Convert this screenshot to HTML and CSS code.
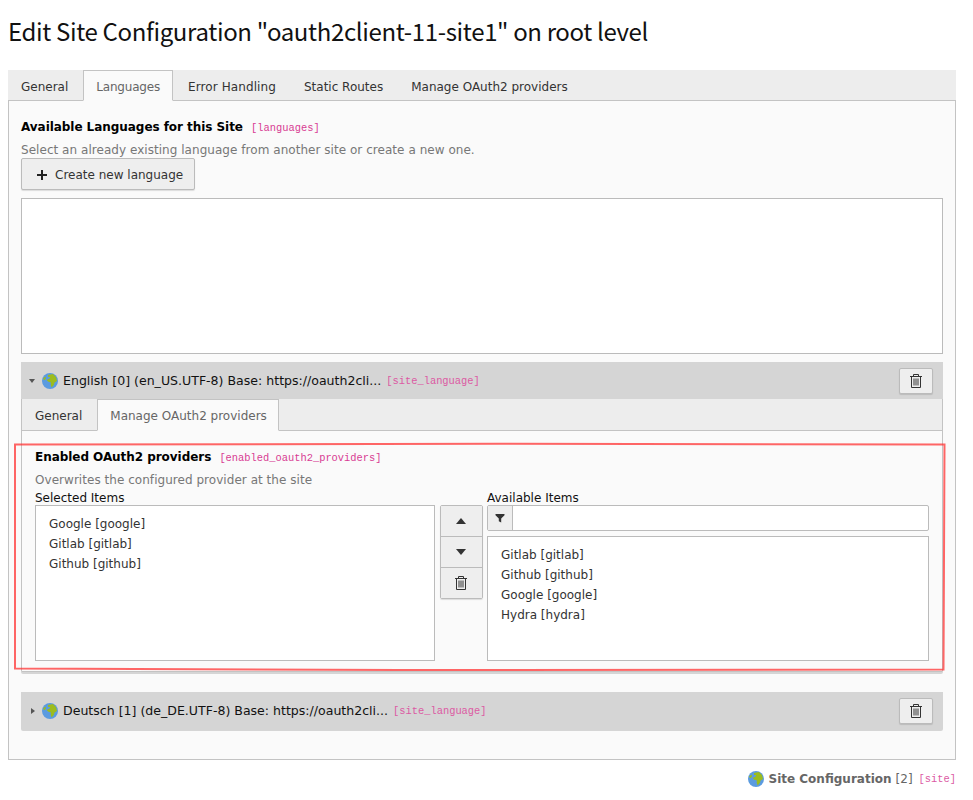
FILE: index.html
```html
<!DOCTYPE html>
<html lang="en">
<head>
    <meta charset="UTF-8">
    <title>Edit Site Configuration</title>
    <link rel="stylesheet" href="styles.css">
</head>
<body>
<svg width="0" height="0" class="defs">
    <symbol id="icon-globe" viewBox="0 0 16 16">
        <circle cx="8" cy="8" r="8" fill="#5b9be0"/>
        <path d="M6 2 L11 1 L14 4 L15 8 L12.6 9.4 L11.8 12 L9.6 14.6 L8.6 11.6 L9 9.4 L6.4 8.8 L4.6 7 L7.6 5.6 L8 4 L6 4 Z" fill="#9cbc1e"/>
        <path d="M1 5.4 L3.4 3.4 L4 5.4 L2.2 7.2 Z" fill="#9cbc1e"/>
    </symbol>
    <symbol id="icon-trash" viewBox="0 0 16 16">
        <path d="M5.5 3V1.5h5V3M2 3.5h12M3.5 3.5v11h9v-11M6 5.5v7M8 5.5v7M10 5.5v7" fill="none" stroke="#333" stroke-width="1"/>
    </symbol>
</svg>

<h1 class="title">Edit Site Configuration "oauth2client-11-site1" on root level</h1>

<div class="tabs">
    <a class="tab">General</a>
    <a class="tab tab-active tab-languages">Languages</a>
    <a class="tab tab-error">Error Handling</a>
    <a class="tab">Static Routes</a>
    <a class="tab">Manage OAuth2 providers</a>
</div>

<div class="panel">
    <div class="field-title">Available Languages for this Site <code class="key">[languages]</code></div>
    <div class="field-desc">Select an already existing language from another site or create a new one.</div>
    <button class="btn btn-create">
        <svg class="plus" width="10" height="10" viewBox="0 0 10 10"><path d="M4 0h2v4h4v2H6v4H4V6H0V4h4Z" fill="#222"/></svg>
        Create new language
    </button>
    <div class="lang-box"></div>

    <div class="inline-item inline-open">
        <div class="inline-head">
            <span class="caret caret-down"></span>
            <svg class="globe"><use href="#icon-globe"/></svg>
            <span class="inline-label">English [0] (en_US.UTF-8) Base: https://oauth2cli...</span>
            <code class="key key-soft">[site_language]</code>
            <button class="btn btn-trash"><svg class="trash"><use href="#icon-trash"/></svg></button>
        </div>
        <div class="tabs tabs-inner">
            <a class="tab">General</a>
            <a class="tab tab-active">Manage OAuth2 providers</a>
        </div>
        <div class="inner-body">
            <div class="field-title">Enabled OAuth2 providers <code class="key">[enabled_oauth2_providers]</code></div>
            <div class="field-desc">Overwrites the configured provider at the site</div>
            <div class="multi">
                <div class="multi-col">
                    <div class="multi-label">Selected Items</div>
                    <ul class="list list-selected">
                        <li>Google [google]</li>
                        <li>Gitlab [gitlab]</li>
                        <li>Github [github]</li>
                    </ul>
                </div>
                <div class="multi-actions">
                    <button class="action"><span class="arrow arrow-up"></span></button>
                    <button class="action"><span class="arrow arrow-down"></span></button>
                    <button class="action"><svg class="trash"><use href="#icon-trash"/></svg></button>
                </div>
                <div class="multi-col">
                    <div class="multi-label">Available Items</div>
                    <div class="filter">
                        <span class="filter-addon">
                            <svg width="10" height="10" viewBox="0 0 10 10"><path d="M0.5 1h9v1.2L6.2 5.4V9.4L3.8 8.2V5.4L0.5 2.2Z" fill="#333"/></svg>
                        </span>
                    </div>
                    <ul class="list list-available">
                        <li>Gitlab [gitlab]</li>
                        <li>Github [github]</li>
                        <li>Google [google]</li>
                        <li>Hydra [hydra]</li>
                    </ul>
                </div>
            </div>
        </div>
    </div>

    <div class="inline-item">
        <div class="inline-head">
            <span class="caret caret-right"></span>
            <svg class="globe"><use href="#icon-globe"/></svg>
            <span class="inline-label">Deutsch [1] (de_DE.UTF-8) Base: https://oauth2cli...</span>
            <code class="key key-soft">[site_language]</code>
            <button class="btn btn-trash"><svg class="trash"><use href="#icon-trash"/></svg></button>
        </div>
    </div>
</div>

<div class="footer">
    <svg class="globe"><use href="#icon-globe"/></svg>
    <strong>Site Configuration</strong> <span>[2]</span> <code class="key key-soft">[site]</code>
</div>

<!-- red marker drawn over the screenshot -->
<svg class="marker" width="973" height="800" viewBox="0 0 973 800">
    <path d="M15 444.5 L500 443.8 L944.5 444.5 L943.5 669.5 L400 670 L15 668.5 Z" fill="none" stroke="#ff2b2b" stroke-opacity="0.72" stroke-width="2"/>
</svg>
</body>
</html>
```
FILE: styles.css
```css
body {
    margin: 0;
    padding: 0 17px 0 8px;
    background-color: #fff;
    color: #333;
    font-family: "DejaVu Sans", sans-serif;
    font-size: 12px;
    line-height: 18px;
}

.defs {
    position: absolute;
}

.title {
    margin: 0;
    padding-top: 16px;
    height: 70px;
    box-sizing: border-box;
    font-family: "Noto Sans CJK SC", "Noto Sans", sans-serif;
    font-size: 24px;
    line-height: 30px;
    letter-spacing: -0.35px;
    font-weight: 400;
    color: #111;
}

.tabs {
    display: flex;
    height: 31px;
    background-color: #ededed;
    border-bottom: 1px solid #c3c3c3;
    box-sizing: border-box;
}

.tab {
    margin-right: 2px;
    padding: 8px 13px 0;
    height: 31px;
    box-sizing: border-box;
    font-size: 12px;
    color: #333;
}

.tab-active {
    padding: 7px 12px 0;
    background-color: #fafafa;
    color: #666;
    border: 1px solid #c3c3c3;
    border-bottom: 1px solid #fafafa;
}

.tab-languages {
    letter-spacing: -0.2px;
}

.tab-error {
    letter-spacing: 0.1px;
}

.panel {
    height: 659px;
    box-sizing: border-box;
    padding: 17px 12px 0;
    background-color: #fafafa;
    border: 1px solid #c3c3c3;
    border-top: 0;
}

.field-title {
    font-weight: 700;
    color: #000;
    height: 19px;
    letter-spacing: -0.05px;
}

.key {
    margin-left: 4px;
    font-family: "Liberation Mono", monospace;
    font-size: 10.4px;
    font-weight: 400;
    letter-spacing: 0;
    color: #d83c93;
}

.key-soft {
    color: #dc5aa3;
    margin-left: 2px;
}

.field-desc {
    margin-top: 4px;
    color: #777;
    height: 18px;
    letter-spacing: 0.04px;
}

.btn {
    font: inherit;
    color: #333;
    background-color: #eee;
    border: 1px solid #bbb;
    border-radius: 2px;
    box-shadow: 0 1px 1px rgba(0, 0, 0, 0.12);
}

.btn-create {
    display: flex;
    align-items: center;
    gap: 8px;
    margin-top: -1px;
    width: 174px;
    height: 32px;
    padding: 1px 0 0 15px;
}

.lang-box {
    margin-top: 8px;
    height: 156px;
    box-sizing: border-box;
    background-color: #fff;
    border: 1px solid #bbb;
}

.inline-item {
    margin-top: 8px;
    border-radius: 2px;
    box-shadow: 0 2px 0 #d5d5d5;
}

.inline-open {
    height: 310px;
    background-color: #ededed;
    border-left: 1px solid #c3c3c3;
    border-right: 1px solid #c3c3c3;
}

.inline-item + .inline-item {
    margin-top: 20px;
}

.inline-head {
    display: flex;
    align-items: center;
    height: 37px;
    padding: 0 10px 0 8px;
    background-color: #d5d5d5;
    color: #111;
}

.inline-open .inline-head {
    margin: 0 -1px;
}

.caret {
    width: 0;
    height: 0;
    margin-right: 7px;
    border-style: solid;
    border-color: transparent;
}

.caret-down {
    border-width: 4px 3.5px 0;
    border-top-color: #555;
}

.caret-right {
    margin-left: 2px;
    border-width: 3.5px 0 3.5px 4px;
    border-left-color: #555;
}

.globe {
    width: 16px;
    height: 16px;
    flex: none;
}

.inline-label {
    margin-left: 5px;
    font-size: 12.55px;
}

.inline-head .key {
    margin-left: 5px;
}

.btn-trash {
    margin-left: auto;
    display: flex;
    align-items: center;
    justify-content: center;
    width: 34px;
    height: 26px;
    padding: 0;
}

.trash {
    width: 16px;
    height: 16px;
}

.tabs-inner {
    height: 32px;
}

.tabs-inner .tab {
    height: 32px;
}

.tabs-inner .tab-active {
    padding-right: 11px;
}

.inner-body {
    height: 241px;
    box-sizing: border-box;
    padding: 17px 13px 0;
    background-color: #fafafa;
    border-bottom: 1px solid #c3c3c3;
}

.multi {
    display: flex;
}

.multi-col {
    flex: 1;
    min-width: 0;
}

.multi-col:first-child {
    flex: none;
    width: 400px;
}

.multi-label {
    height: 17px;
    line-height: 20px;
    margin-top: -1px;
    color: #111;
}

.list {
    margin: 0;
    padding: 8px 0 0 13px;
    list-style: none;
    box-sizing: border-box;
    background-color: #fff;
    border: 1px solid #bbb;
    line-height: 20px;
}

.list-selected {
    height: 156px;
}

.list-available {
    height: 125px;
    margin-top: 5px;
}

.multi-actions {
    display: flex;
    flex-direction: column;
    margin: 16px 4px 0 5px;
    width: 43px;
    height: 94px;
    box-sizing: border-box;
    border: 1px solid #bbb;
    border-radius: 2px;
    box-shadow: 0 1px 1px rgba(0, 0, 0, 0.12);
}

.action {
    display: flex;
    align-items: center;
    justify-content: center;
    flex: 1;
    padding: 0 1px 0 0;
    background-color: #eee;
    border: 0;
    border-bottom: 1px solid #bbb;
}

.action:last-child {
    border-bottom: 0;
}

.arrow {
    width: 0;
    height: 0;
    border-style: solid;
    border-color: transparent;
}

.arrow-up {
    border-width: 0 5px 6px;
    border-bottom-color: #333;
}

.arrow-down {
    border-width: 6px 5px 0;
    border-top-color: #333;
}

.filter {
    height: 26px;
    box-sizing: border-box;
    background-color: #fff;
    border: 1px solid #bbb;
    border-radius: 2px;
}

.filter-addon {
    display: flex;
    align-items: center;
    justify-content: center;
    width: 24px;
    height: 24px;
    background-color: #eee;
    border-right: 1px solid #bbb;
}

.footer {
    display: flex;
    align-items: center;
    justify-content: flex-end;
    gap: 4px;
    height: 38px;
    color: #666;
}

.marker {
    position: absolute;
    left: 0;
    top: 0;
    pointer-events: none;
}
```
